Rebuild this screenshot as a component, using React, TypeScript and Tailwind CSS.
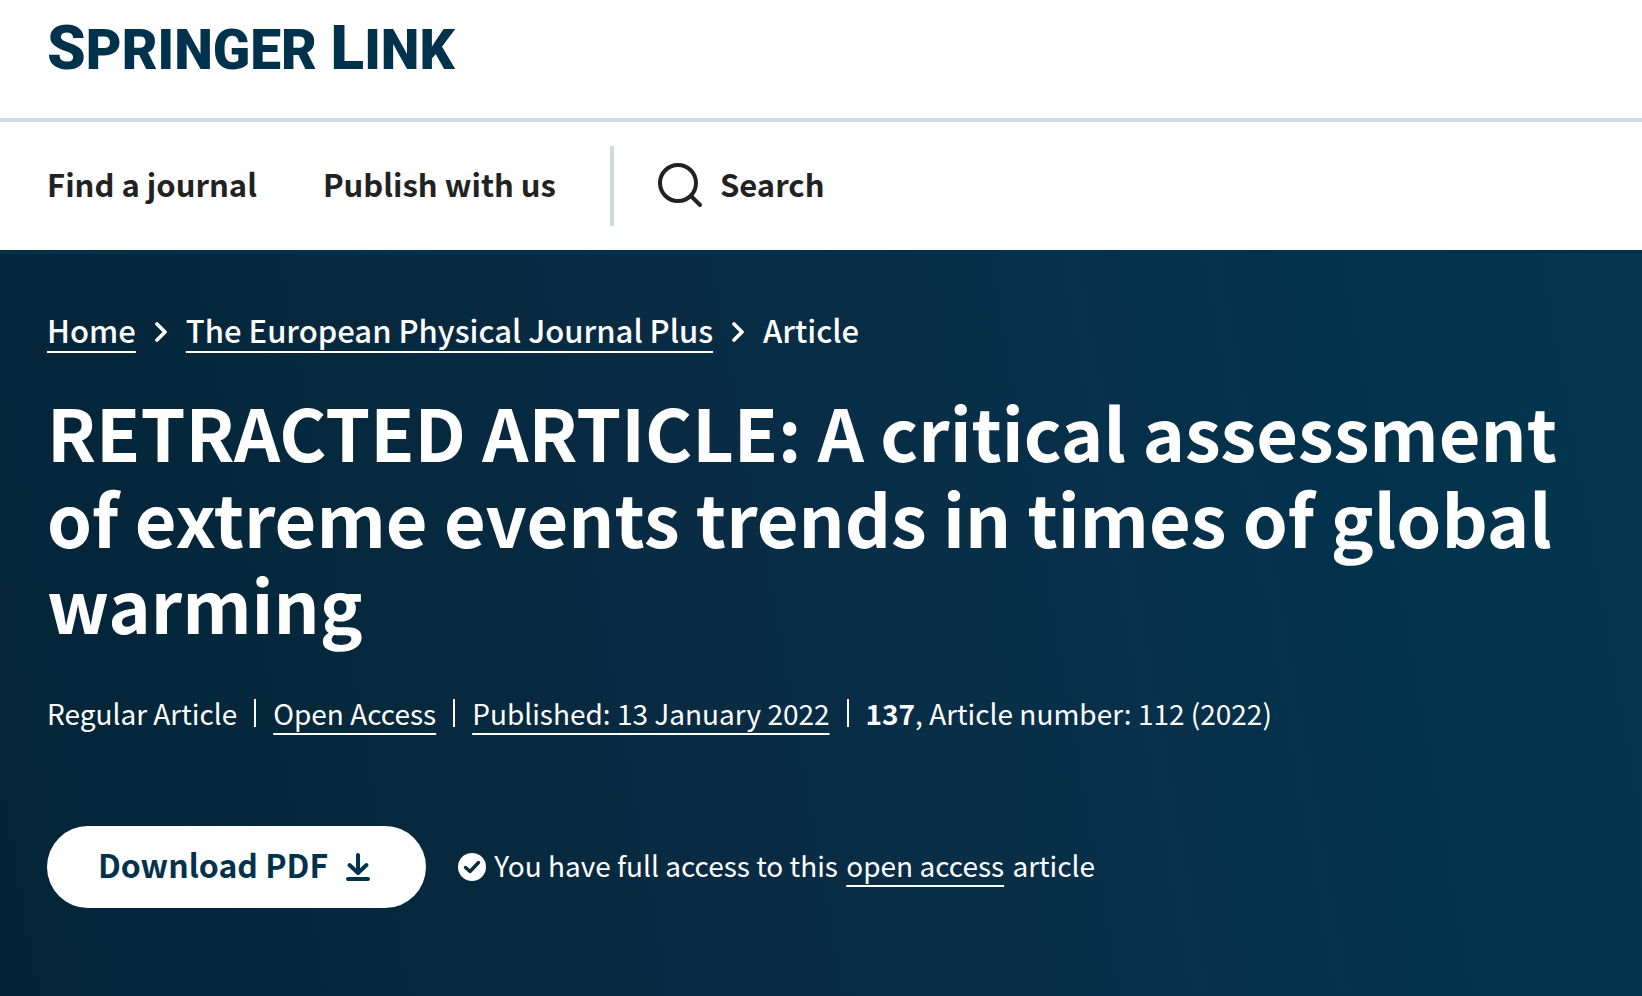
import type { ReactNode } from "react";

function Chevron() {
  return (
    <svg
      viewBox="0 0 12 20"
      className="w-3 h-5 shrink-0 mt-1"
      fill="none"
      stroke="currentColor"
      strokeWidth="3.6"
      strokeLinecap="round"
      strokeLinejoin="round"
      aria-hidden="true"
    >
      <path d="M2 2l8 8-8 8" />
    </svg>
  );
}

function Divider() {
  return <span className="w-[2px] h-7 bg-white" aria-hidden="true" />;
}

function TextLink({ children }: { children: ReactNode }) {
  return (
    <a
      href="#"
      className="underline decoration-2 underline-offset-8 [text-decoration-skip-ink:none]"
    >
      {children}
    </a>
  );
}

function Header() {
  return (
    <header className="bg-white">
      <div className="px-[47px] pt-[18px] pb-[38px] border-b-4 border-[#cedbe0]">
        <a
          href="#"
          aria-label="Springer Link"
          className="block font-['Roboto',sans-serif] font-black text-[55px] leading-[60px] text-[#01324b]"
        >
          <span className="text-[62px]">S</span>PRINGER{" "}
          <span className="text-[62px]">L</span>INK
        </a>
      </div>

      <nav className="flex items-center px-[47px] py-6 text-[31px] leading-9 font-bold text-[#222]">
        <div className="flex gap-[66px] pb-1">
          <a href="#">Find a journal</a>
          <a href="#">Publish with us</a>
        </div>
        <span className="w-1 h-20 ml-[54px] mr-11 bg-[#cedbe0]" aria-hidden="true" />
        <a href="#" className="flex items-center gap-4">
          <svg
            viewBox="0 0 46 46"
            className="w-[46px] h-[46px]"
            fill="none"
            stroke="currentColor"
            strokeWidth="4"
            strokeLinecap="round"
            aria-hidden="true"
          >
            <circle cx="20" cy="20" r="18" />
            <path d="M33 33l9 9" />
          </svg>
          <span className="pb-1">Search</span>
        </a>
      </nav>
    </header>
  );
}

function Breadcrumbs() {
  return (
    <nav
      aria-label="breadcrumbs"
      className="flex flex-wrap items-center gap-x-[19px] text-[31px] leading-10 font-medium"
    >
      <TextLink>Home</TextLink>
      <Chevron />
      <TextLink>The European Physical Journal Plus</TextLink>
      <Chevron />
      <span>Article</span>
    </nav>
  );
}

function ArticleInfo() {
  return (
    <div className="mt-[47px] flex flex-wrap items-center gap-x-[17px] text-[28px] leading-10">
      <span>Regular Article</span>
      <Divider />
      <TextLink>Open Access</TextLink>
      <Divider />
      <TextLink>
        Published: <time dateTime="2022-01-13">13 January 2022</time>
      </TextLink>
      <Divider />
      <span>
        <b>137</b>, Article number: 112 (2022)
      </span>
    </div>
  );
}

function Access() {
  return (
    <div className="mt-[93px] flex flex-wrap items-center gap-8">
      <a
        href="#"
        className="flex items-center gap-[18px] rounded-full bg-white py-5 pl-[51px] pr-14 text-[32px] leading-9 font-bold text-[#01324b]"
      >
        <span className="pb-[6px]">Download PDF</span>
        <svg
          viewBox="0 0 24 28"
          className="w-6 h-7"
          fill="none"
          stroke="currentColor"
          strokeWidth="4"
          strokeLinecap="round"
          strokeLinejoin="round"
          aria-hidden="true"
        >
          <path d="M12 2v17M3.5 12l8.5 8 8.5-8M2 26h20" />
        </svg>
      </a>

      <div className="flex items-center gap-2 text-[28px] leading-10">
        <svg viewBox="0 0 28 28" className="w-7 h-7 shrink-0" aria-hidden="true">
          <circle cx="14" cy="14" r="14" fill="#fff" />
          <path
            d="M7.5 14.5l4.5 4 8.5-9"
            fill="none"
            stroke="#082b42"
            strokeWidth="3.4"
            strokeLinecap="round"
            strokeLinejoin="round"
          />
        </svg>
        <p className="pb-1">
          You have full access to this{" "}
          <span className="mx-[2px]">
            <TextLink>open access</TextLink>
          </span>{" "}
          article
        </p>
      </div>
    </div>
  );
}

export default function App() {
  return (
    <div className="min-h-screen flex flex-col font-['Noto_Sans_CJK_SC','Noto_Sans',sans-serif]">
      <Header />
      <main className="flex-1 border-t-4 border-[#01324b] bg-linear-[80deg,#052438_0%,#05283c_20%,#092b43_42%,#08304a_66%,#02324c_82%,#06374f_100%] px-[47px] pt-14 pb-20 text-white">
        <Breadcrumbs />
        <h1 className="mt-[38px] text-[72px] leading-[86px] font-bold">
          RETRACTED ARTICLE: A critical assessment of extreme events trends in
          times of global warming
        </h1>
        <ArticleInfo />
        <Access />
      </main>
    </div>
  );
}
